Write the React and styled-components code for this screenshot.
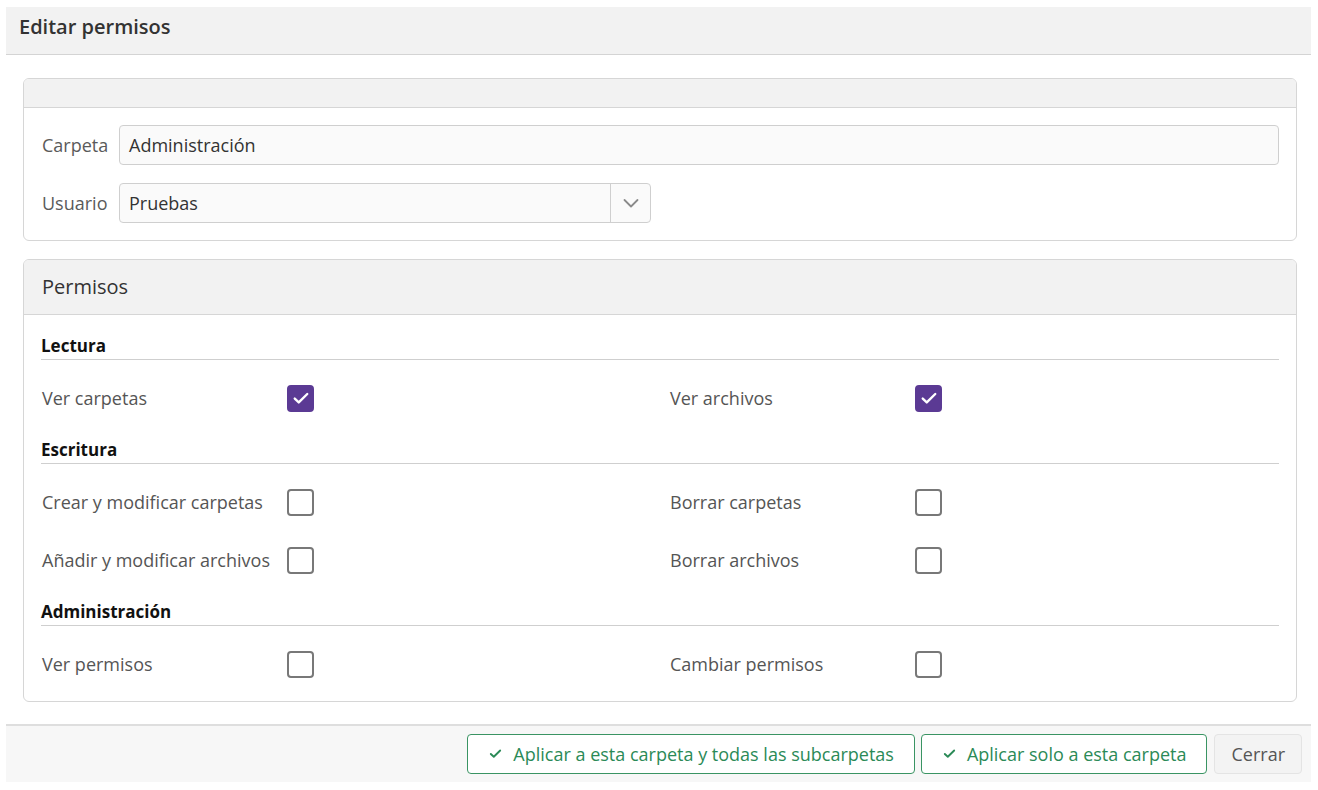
import React from "react";
import styled, { createGlobalStyle } from "styled-components";

const Global = createGlobalStyle`
  html, body { margin: 0; padding: 0; background: #fff; }
  body { font-family: "Open Sans", "Noto Sans", sans-serif; color: #333; }
  * { box-sizing: border-box; }
`;

const Page = styled.div`
  padding: 7px 7px 0 6px;
  display: flex;
  flex-direction: column;
`;

const TitleBar = styled.div`
  height: 48px;
  background: #f2f2f2;
  border-bottom: 1px solid #d4d4d4;
  display: flex;
  align-items: center;
  padding: 0 13px 7px;
`;

const Title = styled.h1`
  margin: 0;
  font-size: 20px;
  line-height: 26px;
  font-weight: 600;
  color: #333;
`;

const Content = styled.div`
  padding: 23px 14px 22px 17px;
  display: flex;
  flex-direction: column;
  gap: 18px;
`;

const Card = styled.section`
  border: 1px solid #d6d6d6;
  border-radius: 6px;
  overflow: hidden;
  background: #fff;
`;

const CardHeader = styled.div`
  height: ${(p) => p.$h}px;
  background: #f2f2f2;
  border-bottom: 1px solid #d6d6d6;
  display: flex;
  align-items: center;
  padding: 0 18px 1px;
  font-size: 20px;
  color: #333;
`;

const FormBody = styled.div`
  padding: 17px 17px 17px 17px;
  display: grid;
  grid-template-columns: 70px 1fr;
  column-gap: 8px;
  row-gap: 18px;
  align-items: center;
`;

const FieldLabel = styled.label`
  font-size: 18px;
  color: #5a5a5a;
  padding-left: 1px;
`;

const TextInput = styled.div`
  height: 40px;
  border: 1px solid #cfcfcf;
  border-radius: 4px;
  background: #fafafa;
  display: flex;
  align-items: center;
  padding-left: 9px;
  font-size: 18px;
  color: #333;
`;

const Select = styled.div`
  width: 532px;
  height: 40px;
  border: 1px solid #cfcfcf;
  border-radius: 4px;
  background: #fafafa;
  display: flex;
  align-items: stretch;
  font-size: 18px;
  color: #333;
`;

const SelectValue = styled.div`
  flex: 1;
  display: flex;
  align-items: center;
  padding-left: 9px;
`;

const SelectArrow = styled.div`
  width: 40px;
  border-left: 1px solid #cfcfcf;
  display: flex;
  align-items: center;
  justify-content: center;
`;

const PermBody = styled.div`
  padding: 20px 17px 17px 17px;
  display: flex;
  flex-direction: column;
`;

const SectionTitle = styled.div`
  margin-top: ${(p) => (p.$first ? 0 : 21)}px;
  font-size: 17px;
  font-weight: 700;
  line-height: 21px;
  color: #111;
  padding-bottom: 3px;
  border-bottom: 1px solid #cfcfcf;
`;

const PermGrid = styled.div`
  margin-top: 18px;
  display: grid;
  grid-template-columns: 1fr 1fr;
  column-gap: 18px;
  row-gap: 18px;
`;

const PermItem = styled.div`
  display: flex;
  align-items: center;
  height: 40px;
`;

const PermLabel = styled.span`
  width: 246px;
  font-size: 18px;
  color: #555;
  padding-left: 1px;
  white-space: nowrap;
`;

const Box = styled.span`
  width: 27px;
  height: 27px;
  border-radius: 4px;
  border: 2px solid ${(p) => (p.$on ? "#5b3a94" : "#787878")};
  background: ${(p) => (p.$on ? "#5b3a94" : "#fff")};
  display: flex;
  align-items: center;
  justify-content: center;
`;

const Footer = styled.div`
  border-top: 2px solid #dedede;
  background: #f7f7f7;
  height: 58px;
  display: flex;
  justify-content: flex-end;
  align-items: center;
  gap: 6px;
  padding: 0 9px 1px 0;
`;

const Button = styled.button`
  height: 40px;
  border-radius: 4px;
  font-family: inherit;
  font-size: 18px;
  display: flex;
  align-items: center;
  gap: 10px;
  padding: ${(p) => (p.$primary ? "0 20px 0 20px" : "0 16px")};
  cursor: pointer;
  white-space: nowrap;
  border: 1px solid ${(p) => (p.$primary ? "#3a9463" : "#e4e4e4")};
  background: ${(p) => (p.$primary ? "#fff" : "#f3f3f3")};
  color: ${(p) => (p.$primary ? "#2b8a57" : "#555")};
  margin-left: ${(p) => (p.$primary ? 0 : 1)}px;
`;

const Check = ({ color = "#fff", size = 16, width = 1.8 }) => (
  <svg width={size} height={size} viewBox="0 0 16 16" fill="none">
    <path d="M3 8.5l3.2 3L13 4.8" stroke={color} strokeWidth={width} strokeLinecap="round" strokeLinejoin="round" />
  </svg>
);

const Chevron = () => (
  <svg width="18" height="18" viewBox="0 0 18 18" fill="none">
    <path d="M2.5 6l6.5 6.5L15.5 6" stroke="#8a8a8a" strokeWidth="1.8" strokeLinecap="round" strokeLinejoin="round" />
  </svg>
);

const sections = [
  {
    title: "Lectura",
    items: [
      ["Ver carpetas", true],
      ["Ver archivos", true],
    ],
  },
  {
    title: "Escritura",
    items: [
      ["Crear y modificar carpetas", false],
      ["Borrar carpetas", false],
      ["Añadir y modificar archivos", false],
      ["Borrar archivos", false],
    ],
  },
  {
    title: "Administración",
    items: [
      ["Ver permisos", false],
      ["Cambiar permisos", false],
    ],
  },
];

export default function App() {
  return (
    <>
      <Global />
      <Page>
        <TitleBar>
          <Title>Editar permisos</Title>
        </TitleBar>
        <Content>
          <Card>
            <CardHeader $h={29} />
            <FormBody>
              <FieldLabel>Carpeta</FieldLabel>
              <TextInput>Administración</TextInput>
              <FieldLabel>Usuario</FieldLabel>
              <Select>
                <SelectValue>Pruebas</SelectValue>
                <SelectArrow>
                  <Chevron />
                </SelectArrow>
              </Select>
            </FormBody>
          </Card>
          <Card>
            <CardHeader $h={55}>Permisos</CardHeader>
            <PermBody>
              {sections.map((s, i) => (
                <React.Fragment key={s.title}>
                  <SectionTitle $first={i === 0}>{s.title}</SectionTitle>
                  <PermGrid>
                    {s.items.map(([label, on]) => (
                      <PermItem key={label}>
                        <PermLabel>{label}</PermLabel>
                        <Box $on={on}>{on && <Check size={20} width={1.9} />}</Box>
                      </PermItem>
                    ))}
                  </PermGrid>
                </React.Fragment>
              ))}
            </PermBody>
          </Card>
        </Content>
        <Footer>
          <Button $primary>
            <Check color="#2b8a57" size={15} width={2} />
            Aplicar a esta carpeta y todas las subcarpetas
          </Button>
          <Button $primary>
            <Check color="#2b8a57" size={15} width={2} />
            Aplicar solo a esta carpeta
          </Button>
          <Button>Cerrar</Button>
        </Footer>
      </Page>
    </>
  );
}
